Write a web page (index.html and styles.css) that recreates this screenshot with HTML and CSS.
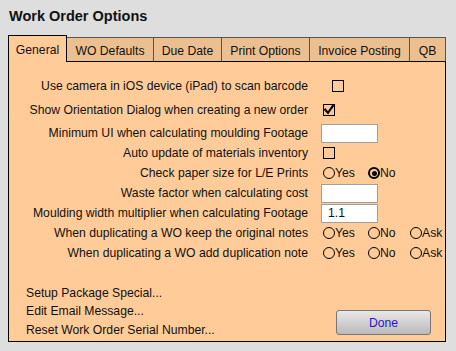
FILE: index.html
```html
<!DOCTYPE html>
<html lang="en">
<head>
    <meta charset="UTF-8">
    <meta name="viewport" content="width=device-width, initial-scale=1.0">
    <title>Work Order Options</title>
    <link rel="stylesheet" href="styles.css">
</head>
<body>
    <div class="window">
        <h1 class="title">Work Order Options</h1>

        <div class="tabs">
            <div class="tab active">General</div>
            <div class="tab">WO Defaults</div>
            <div class="tab">Due Date</div>
            <div class="tab">Print Options</div>
            <div class="tab">Invoice Posting</div>
            <div class="tab">QB</div>
        </div>

        <div class="panel">
            <div class="options">
                <div class="row row-first">
                    <span class="label">Use camera in iOS device (iPad) to scan barcode</span>
                    <div class="control"><span class="checkbox checkbox-indent"></span></div>
                </div>
                <div class="row row-second">
                    <span class="label">Show Orientation Dialog when creating a new order</span>
                    <div class="control">
                        <span class="checkbox">
                            <svg width="10" height="10" viewBox="0 0 10 10"><path d="M1.2 4.6 L4 7.8 L8.8 1" fill="none" stroke="#000" stroke-width="2.2" stroke-linecap="square"/></svg>
                        </span>
                    </div>
                </div>
                <div class="row">
                    <span class="label">Minimum UI when calculating moulding Footage</span>
                    <div class="control"><input class="field" type="text" value=""></div>
                </div>
                <div class="row">
                    <span class="label">Auto update of materials inventory</span>
                    <div class="control"><span class="checkbox"></span></div>
                </div>
                <div class="row">
                    <span class="label">Check paper size for L/E Prints</span>
                    <div class="control">
                        <span class="option"><span class="radio"></span>Yes</span>
                        <span class="option"><span class="radio selected"></span>No</span>
                    </div>
                </div>
                <div class="row">
                    <span class="label">Waste factor when calculating cost</span>
                    <div class="control"><input class="field" type="text" value=""></div>
                </div>
                <div class="row">
                    <span class="label">Moulding width multiplier when calculating Footage</span>
                    <div class="control"><input class="field" type="text" value="1.1"></div>
                </div>
                <div class="row">
                    <span class="label">When duplicating a WO keep the original notes</span>
                    <div class="control">
                        <span class="option"><span class="radio"></span>Yes</span>
                        <span class="option"><span class="radio"></span>No</span>
                        <span class="option"><span class="radio"></span>Ask</span>
                    </div>
                </div>
                <div class="row">
                    <span class="label">When duplicating a WO add duplication note</span>
                    <div class="control">
                        <span class="option"><span class="radio"></span>Yes</span>
                        <span class="option"><span class="radio"></span>No</span>
                        <span class="option"><span class="radio"></span>Ask</span>
                    </div>
                </div>
            </div>

            <div class="footer">
                <ul class="links">
                    <li>Setup Package Special...</li>
                    <li>Edit Email Message...</li>
                    <li>Reset Work Order Serial Number...</li>
                </ul>
                <button class="done">Done</button>
            </div>
        </div>
    </div>
</body>
</html>
```

FILE: styles.css
```css
* {
    margin: 0;
    padding: 0;
    box-sizing: border-box;
}

body {
    font-family: "Liberation Sans", Arial, sans-serif;
    font-size: 12.2px;
    color: #111;
    background: #dedede;
    width: 456px;
    height: 351px;
    overflow: hidden;
}

.window {
    padding: 0 10px 0 8px;
}

.title {
    height: 35px;
    padding: 8px 0 0 1px;
    font-size: 14.5px;
    line-height: 17px;
    font-weight: bold;
    color: #111;
}

/* tab strip */
.tabs {
    display: flex;
    align-items: flex-end;
    height: 26px;
}

.tab {
    height: 24px;
    margin-left: -1px;
    padding-top: 3px;
    border: 1px solid #555;
    border-bottom: none;
    background: #ebbf90;
    display: flex;
    align-items: center;
    justify-content: center;
    white-space: nowrap;
}

.tab:nth-child(1) { width: 59px; margin-left: 0; }
.tab:nth-child(2) { width: 88px; }
.tab:nth-child(3) { width: 69px; }
.tab:nth-child(4) { width: 89px; }
.tab:nth-child(5) { width: 101px; }
.tab:nth-child(6) { width: 37px; }

.tab.active {
    position: relative;
    z-index: 1;
    height: 27px;
    margin-bottom: -1px;
    padding-top: 2px;
    border-color: #000;
    background: #ffcc99;
}

/* panel */
.panel {
    width: 438px;
    height: 281px;
    border: 1px solid #000;
    background: #ffcc99;
    padding-top: 14px;
    display: flex;
    flex-direction: column;
}

.row {
    display: flex;
    align-items: center;
    height: 20px;
}

.row-first {
    margin-bottom: 4px;
}

.row-second {
    margin-bottom: 3px;
}

.label {
    flex-shrink: 0;
    width: 299px;
    text-align: right;
    white-space: nowrap;
}

.control {
    display: flex;
    align-items: center;
    padding-left: 13px;
}

.checkbox {
    width: 12px;
    height: 12px;
    margin-left: 2px;
    border: 1px solid #000;
    display: flex;
    align-items: center;
    justify-content: center;
}

.checkbox-indent {
    margin-left: 11px;
}

.field {
    width: 57px;
    height: 19px;
    border: 1px solid #a0a0a0;
    background: #fff;
    font-family: inherit;
    font-size: 12.2px;
    color: #111;
    padding-left: 6px;
    outline: none;
}

.option {
    flex-shrink: 0;
    display: inline-flex;
    align-items: center;
    width: 45px;
    white-space: nowrap;
}

.option:first-child {
    margin-left: 2px;
}

.option:nth-child(2) {
    width: 42px;
}

.option:last-child {
    width: auto;
}

.radio {
    flex-shrink: 0;
    width: 12px;
    height: 12px;
    border: 1px solid #000;
    border-radius: 50%;
    display: flex;
    align-items: center;
    justify-content: center;
}

.radio.selected {
    border-width: 2px;
}

.radio.selected::after {
    content: "";
    width: 5px;
    height: 5px;
    border-radius: 50%;
    background: #000;
}

/* bottom area */
.footer {
    margin-top: auto;
    display: flex;
    justify-content: space-between;
    align-items: flex-end;
    padding: 0 14px 2px 17px;
}

.links {
    list-style: none;
    line-height: 18.5px;
}

.done {
    width: 95px;
    height: 25px;
    margin-bottom: 4px;
    border: 1px solid #777;
    border-radius: 3px;
    background: linear-gradient(#e8e8e8, #bababa);
    color: #2a14c8;
    font-family: inherit;
    font-size: 12.2px;
    cursor: pointer;
}
```
